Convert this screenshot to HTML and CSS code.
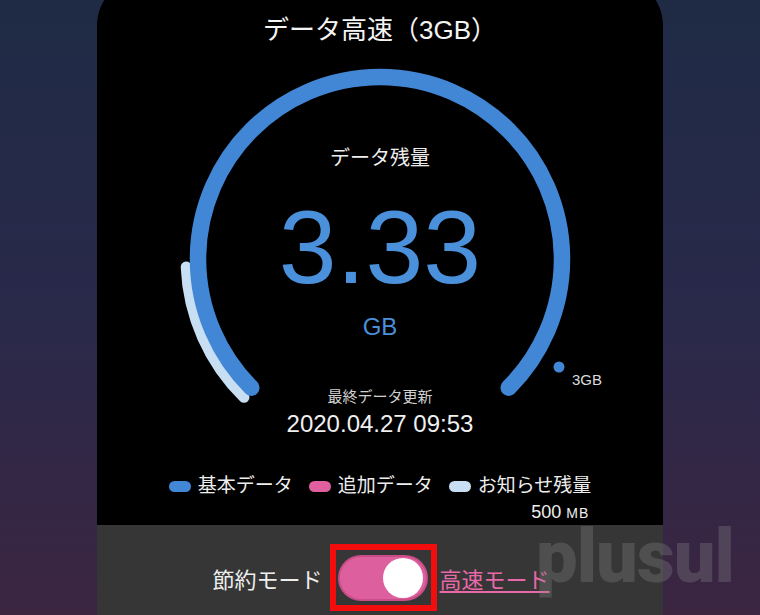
FILE: index.html
```html
<!doctype html>
<html lang="ja">
  <head>
    <meta charset="UTF-8" />
    <title>データ残量</title>
    <link rel="stylesheet" href="styles.css">
  </head>
  <body>
    <div class="card">
      <h1 class="title">データ高速（3GB）</h1>

      <div class="gauge">
        <svg class="gauge-ring" width="566" height="420" viewBox="0 0 566 420">
          <path d="M 89.2 222 A 194 194 0 0 0 147 352.3" fill="none" stroke="#c8def2" stroke-width="11" stroke-linecap="round" />
          <path d="M 154.3 342.7 A 182 182 0 1 1 411.7 342.7" fill="none" stroke="#4287d5" stroke-width="16.5" stroke-linecap="round" />
          <circle cx="462" cy="322" r="5.5" fill="#4287d5" />
          <text x="475" y="340" class="gauge-max">3GB</text>
        </svg>
        <div class="gauge-text">
          <div class="gauge-label">データ残量</div>
          <div class="gauge-value">3.33</div>
          <div class="gauge-unit">GB</div>
          <div class="updated-label">最終データ更新</div>
          <div class="updated">2020.04.27 09:53</div>
        </div>
      </div>

      <div class="legend">
        <div class="legend-row">
          <span class="legend-item"><span class="pill pill-base"></span>基本データ</span>
          <span class="legend-item"><span class="pill pill-extra"></span>追加データ</span>
          <span class="legend-item"><span class="pill pill-notice"></span>お知らせ残量</span>
        </div>
        <div class="legend-sub">500 <span class="small">MB</span></div>
      </div>

      <div class="footer">
        <span class="mode-label">節約モード</span>
        <span class="highlight">
          <span class="toggle"><span class="knob"></span></span>
        </span>
        <a class="mode-link" href="#">高速モード</a>
      </div>
    </div>

    <div class="watermark">plusul</div>
  </body>
</html>
```

FILE: styles.css
```css
html,
body {
  height: 100%;
}
body {
  margin: 0;
  overflow: hidden;
  position: relative;
  font-family: "Liberation Sans", "Noto Sans CJK JP", sans-serif;
  background: linear-gradient(180deg, #1f2b45 0%, #29294a 50%, #3b2541 100%);
  color: #fff;
}
.card {
  width: 566px;
  margin: -24px auto 0;
  padding-top: 39px;
  background: #000;
  border-radius: 50px;
  overflow: hidden;
}
.title {
  margin: 0;
  font-size: 26px;
  font-weight: normal;
  line-height: 30px;
  text-align: center;
  color: #f4f4f4;
}
.gauge {
  position: relative;
}
.gauge-ring {
  position: absolute;
  top: 0;
  left: 0;
}
.gauge-max {
  font-family: "Liberation Sans", sans-serif;
  font-size: 15px;
  fill: #dcdcdc;
}
.gauge-text {
  position: relative;
  padding-top: 101px;
  text-align: center;
}
.gauge-label {
  font-size: 20px;
  line-height: 24px;
  color: #eee;
}
.gauge-value {
  margin-top: 25px;
  font-size: 104px;
  line-height: 104px;
  color: #4a90da;
}
.gauge-unit {
  margin-top: 14px;
  font-size: 24px;
  line-height: 28px;
  color: #4a90da;
}
.updated-label {
  margin-top: 47px;
  font-size: 15px;
  line-height: 18px;
  color: #d0d0d0;
}
.updated {
  margin-top: 4px;
  font-size: 24px;
  line-height: 28px;
  color: #f0f0f0;
}
.legend {
  display: flex;
  flex-direction: column;
  align-items: flex-end;
  width: fit-content;
  margin: 36px auto 0;
}
.legend-row {
  display: flex;
  gap: 16px;
  font-size: 19px;
  line-height: 24px;
  color: #eee;
}
.legend-item {
  display: flex;
  align-items: center;
  gap: 7px;
}
.pill {
  display: inline-block;
  width: 22px;
  height: 11px;
  border-radius: 6px;
}
.pill-base {
  background: #4287d5;
}
.pill-extra {
  background: #df5f9f;
}
.pill-notice {
  background: #c8def2;
}
.legend-sub {
  margin-top: 3px;
  margin-right: 2px;
  font-size: 18px;
  line-height: 22px;
  color: #eee;
}
.legend-sub .small {
  font-size: 14px;
  letter-spacing: 1px;
}
.footer {
  display: flex;
  justify-content: center;
  align-items: center;
  margin-top: 1px;
  padding: 19px 0 60px 2px;
  background: #363636;
}
.mode-label {
  font-size: 22px;
  color: #eee;
}
.highlight {
  display: flex;
  align-items: center;
  justify-content: center;
  width: 95px;
  height: 55px;
  margin: 0 3px 0 7px;
  border: 6px solid #f40d0d;
}
.toggle {
  display: flex;
  align-items: center;
  justify-content: flex-end;
  box-sizing: border-box;
  width: 90px;
  height: 46px;
  padding-right: 3px;
  background: #de5f9d;
  border: 2px solid #c94d88;
  border-radius: 23px;
}
.knob {
  width: 40px;
  height: 40px;
  border-radius: 50%;
  background: #fff;
}
.mode-link {
  font-size: 22px;
  color: #e868a8;
  text-decoration: underline;
  text-underline-offset: 3px;
}
.watermark {
  position: absolute;
  left: 536px;
  top: 527px;
  font-family: Roboto, sans-serif;
  font-size: 74px;
  font-weight: 900;
  line-height: 60px;
  letter-spacing: -1px;
  color: rgba(140, 140, 140, 0.3);
}
```
